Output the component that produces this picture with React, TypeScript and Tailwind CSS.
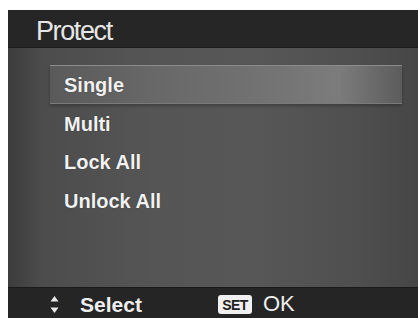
import React from "react";

const items = ["Single", "Multi", "Lock All", "Unlock All"];

export default function App() {
  return (
    <div className="w-[418px] h-[318px] bg-white pl-[8px] pt-[10px] overflow-hidden" style={{ fontFamily: '"Liberation Sans", Arial, sans-serif' }}>
      <div className="flex flex-col w-[410px] h-[308px]">
        <div className="h-[38px] shrink-0 bg-[#262626] pl-[28px] pt-[8px] border-b border-[#1c1c1c]">
          <span className="block text-[27px] leading-none tracking-[-1.4px] text-[#e6e6e6]">Protect</span>
        </div>
        <div className="flex-1 bg-[linear-gradient(90deg,#3c3c3c_0%,#4c4c4c_8%,#555555_35%,#575757_60%,#4f4f4f_85%,#464646_100%)] pt-[17px]">
          <div className="flex flex-col">
            {items.map((t, i) => (
              <div
                key={t}
                className={
                  "ml-[42px] w-[352px] h-[38.5px] pl-[14px] pt-[2px] flex items-center " +
                  (i === 0
                    ? "bg-[linear-gradient(90deg,#5a5a5a_0%,#686868_30%,#747474_65%,#7c7c7c_82%,#5c5c5c_100%)] border-t border-b border-t-[#8c8c8c] border-b-[#7a7a7a] shadow-[0_2px_3px_rgba(0,0,0,0.25)]"
                    : "")
                }
              >
                <span className="text-[20px] font-bold leading-none text-[#f2f2f2] [text-shadow:0_0_1px_rgba(0,0,0,0.6)]">{t}</span>
              </div>
            ))}
          </div>
        </div>
        <div className="h-[31px] shrink-0 bg-[#252525] border-t border-[#1a1a1a] flex items-start pt-[6px] relative">
          <svg className="absolute left-[42px] top-[7px]" width="9" height="19" viewBox="0 0 9 19">
            <path d="M4.5 1 L8.5 6.5 L0.5 6.5 Z" fill="#e8e8e8" />
            <path d="M4.5 18 L8.5 12.5 L0.5 12.5 Z" fill="#e8e8e8" />
          </svg>
          <span className="ml-[72px] text-[21px] font-bold leading-none text-[#eeeeee]">Select</span>
          <div className="absolute left-[210px] top-[7px] w-[34px] h-[19px] bg-[#f0f0f0] rounded-[3px] flex items-center justify-center">
            <span className="text-[14px] font-bold leading-none text-[#222] tracking-[-0.5px]">SET</span>
          </div>
          <span className="absolute left-[255px] top-[5px] text-[22px] leading-none text-[#eeeeee]">OK</span>
        </div>
      </div>
    </div>
  );
}
